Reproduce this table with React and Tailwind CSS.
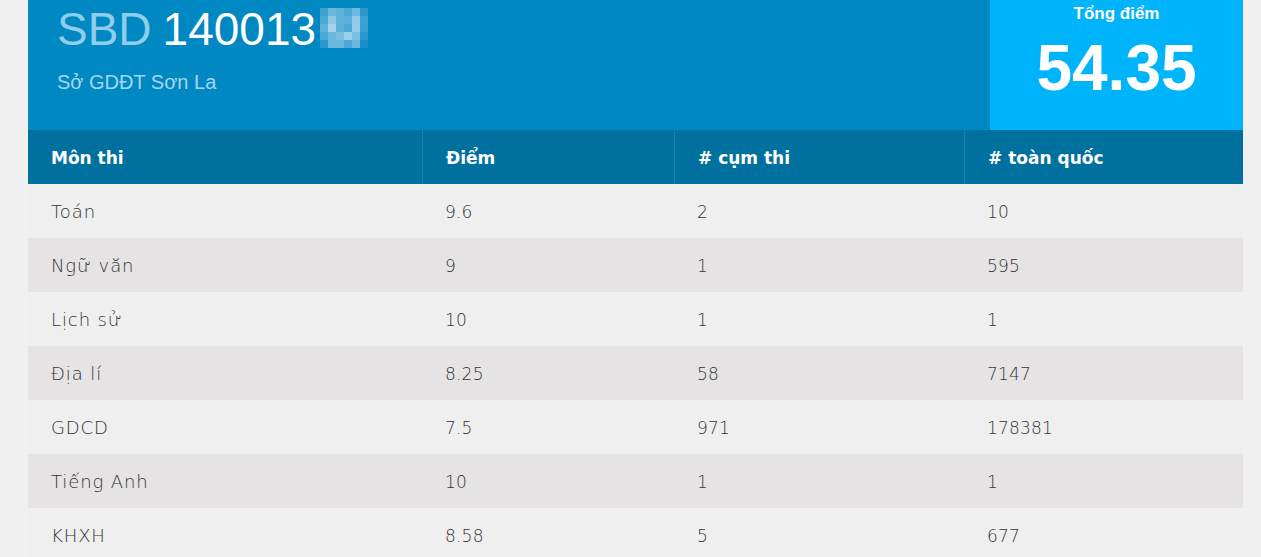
const mosaic = [
  ['#3f9fd0', '#6ab8dd', '#5fb1da', '#4aa8d6', '#6ab9e0', '#2a96cc'],
  ['#4aa6d5', '#8ec8e5', '#5eb2dc', '#5bb1dc', '#8fcbe8', '#3ba0d2'],
  ['#5fb1da', '#a6d3ec', '#5eb0da', '#4aa8d6', '#95cde8', '#3b9fd2'],
  ['#4ba7d6', '#69b7de', '#79bee2', '#9cd0ea', '#79c0e3', '#2a96cc'],
  ['#2a96cc', '#6ab8dd', '#6ab8dd', '#4aa8d6', '#6ab8dd', '#1a8ec6'],
];

const rows = [
  { subject: 'Toán', score: '9.6', cluster: '2', nation: '10' },
  { subject: 'Ngữ văn', score: '9', cluster: '1', nation: '595' },
  { subject: 'Lịch sử', score: '10', cluster: '1', nation: '1' },
  { subject: 'Địa lí', score: '8.25', cluster: '58', nation: '7147' },
  { subject: 'GDCD', score: '7.5', cluster: '971', nation: '178381' },
  { subject: 'Tiếng Anh', score: '10', cluster: '1', nation: '1' },
  { subject: 'KHXH', score: '8.58', cluster: '5', nation: '677' },
];

function Mosaic() {
  return (
    <svg width="48" height="40" viewBox="0 0 48 40" className="ml-[4px] self-start mt-[2px]">
      {mosaic.map((row, r) =>
        row.map((c, i) => <rect key={`${r}-${i}`} x={i * 8} y={r * 8} width="8" height="8" fill={c} />)
      )}
    </svg>
  );
}

export default function App() {
  const cols = 'grid grid-cols-[394px_252px_290px_1fr]';

  return (
    <div className="min-h-screen bg-[#f0f0f0]">
      <div className="ml-[28px] w-[1215px]">
        <div className="flex h-[130px] bg-[#0088c2] font-['Liberation_Sans',Arial,sans-serif]">
          <div className="flex-1 pl-[29px] pt-[6px]">
            <div className="flex items-center text-[46px] leading-none">
              <span className="text-[#8fcdea]">SBD</span>
              <span className="ml-[11px] text-white">140013</span>
              <Mosaic />
            </div>
            <div className="mt-[20px] text-[20px] leading-none text-[#a4d6ee]">Sở GDĐT Sơn La</div>
          </div>
          <div className="w-[253px] bg-[#00b4fb] pt-[5px] text-center text-white font-bold">
            <div className="text-[17px] leading-none">Tổng điểm</div>
            <div className="mt-[14px] text-[64px] leading-none">54.35</div>
          </div>
        </div>

        <div className="font-['DejaVu_Sans',sans-serif]">
          <div className={`${cols} h-[54px] bg-[#00719f] text-[17px] text-white font-bold`}>
            {['Môn thi', 'Điểm', '# cụm thi', '# toàn quốc'].map((h, i) => (
              <div
                key={h}
                className={`flex items-center pl-[23px] pt-[3px] ${i > 0 ? 'border-l border-[#1b7fab]' : ''}`}
              >
                {h}
              </div>
            ))}
          </div>
          {rows.map((r, idx) => (
            <div
              key={r.subject}
              className={`${cols} h-[54px] text-[#333333] font-light ${
                idx % 2 === 0 ? 'bg-[#efefef]' : 'bg-[#e5e3e4]'
              }`}
            >
              <div className="flex items-center pl-[23px] text-[18px] tracking-[0.9px]">{r.subject}</div>
              <div className="flex items-center pl-[23px] pt-[3px] text-[17px] tracking-[0.2px]">{r.score}</div>
              <div className="flex items-center pl-[23px] pt-[3px] text-[17px] tracking-[0.2px]">{r.cluster}</div>
              <div className="flex items-center pl-[23px] pt-[3px] text-[17px] tracking-[0.2px]">{r.nation}</div>
            </div>
          ))}
        </div>
      </div>
    </div>
  );
}
